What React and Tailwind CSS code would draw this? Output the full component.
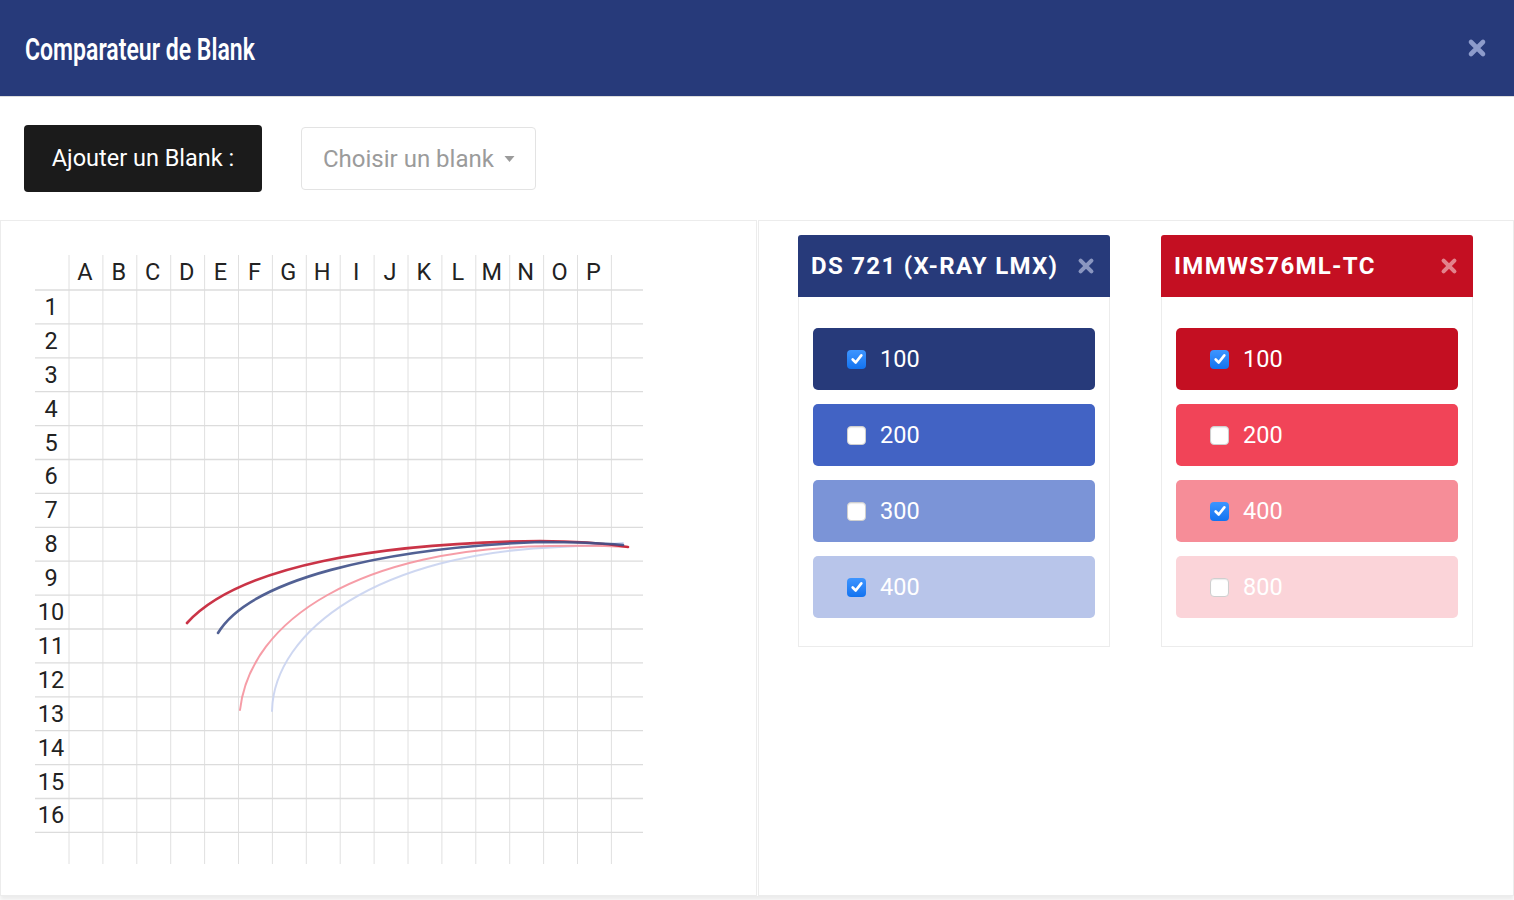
import { useState } from 'react';

const COLS = 'ABCDEFGHIJKLMNOP'.split('');
const ROWS = Array.from({ length: 16 }, (_, i) => i + 1);

// grid geometry, page coordinates
const X0 = 69;
const Y0 = 290;
const STEP = 33.9;

const blanks = [
    {
        id: 'ds721',
        name: 'DS 721 (X-RAY LMX)',
        header: 'bg-[#273a7a]',
        close: 'text-[#8a96c0]',
        sizes: [
            { size: 100, bg: 'bg-[#273a7a]', checked: true },
            { size: 200, bg: 'bg-[#4263c4]', checked: false },
            { size: 300, bg: 'bg-[#7b94d7]', checked: false },
            { size: 400, bg: 'bg-[#b8c5ea]', checked: true },
        ],
    },
    {
        id: 'immws',
        name: 'IMMWS76ML-TC',
        header: 'bg-[#c40f22]',
        close: 'text-[#e2838c]',
        sizes: [
            { size: 100, bg: 'bg-[#c40f22]', checked: true },
            { size: 200, bg: 'bg-[#f14458]', checked: false },
            { size: 400, bg: 'bg-[#f68d98]', checked: true },
            { size: 800, bg: 'bg-[#fbd4d9]', checked: false },
        ],
    },
];

// curves drawn on the grid (one per checked size)
const curves = [
    { d: 'M272 711 C 274 630 380 553 560 547 Q 600 545 623 543', color: '#c9d3f0', width: 2 },
    { d: 'M240 710 C 250 620 360 548 550 546 Q 595 545 628 547', color: '#f5929d', width: 2 },
    { d: 'M187 623 C 240 565 380 543 540 541 Q 590 541 628 547', color: '#c41e33', width: 2.6 },
    { d: 'M218 633 C 250 580 380 548 540 542 Q 590 542 623 545', color: '#3f5088', width: 2.6 },
];

function CloseIcon({ className }) {
    return (
        <svg viewBox="0 0 20 20" className={className} fill="none">
            <path d="M4 4 L16 16 M16 4 L4 16" stroke="currentColor" strokeWidth="4.6" strokeLinecap="round" />
        </svg>
    );
}

function Checkbox({ checked }) {
    if (checked) {
        return (
            <span className="w-[19px] h-[19px] rounded-[4px] bg-gradient-to-b from-[#3d95ff] to-[#1173f0] flex items-center justify-center shrink-0">
                <svg viewBox="0 0 12 12" className="w-[14px] h-[14px]" fill="none">
                    <path d="M2.3 6.4 L4.9 9 L9.7 2.9" stroke="white" strokeWidth="2.3" strokeLinecap="round" strokeLinejoin="round" />
                </svg>
            </span>
        );
    }
    return <span className="w-[19px] h-[19px] rounded-[4px] bg-white border border-[#cfcfcf] shadow-[inset_0_1px_1px_rgba(0,0,0,0.08)] shrink-0" />;
}

function Chart() {
    const right = 643;
    return (
        <svg width="755" height="674" viewBox="1 221 755 674" className="block">
            {/* vertical lines */}
            {Array.from({ length: 17 }, (_, i) => (
                <line key={'v' + i} x1={X0 + i * STEP} y1={255} x2={X0 + i * STEP} y2={864} stroke="#e0e0e0" strokeWidth="1" />
            ))}
            {/* horizontal lines */}
            {Array.from({ length: 17 }, (_, i) => (
                <line key={'h' + i} x1={35} y1={Y0 + i * STEP} x2={right} y2={Y0 + i * STEP} stroke="#dcdcdc" strokeWidth="1.3" />
            ))}
            {COLS.map((c, i) => (
                <text key={c} x={X0 + i * STEP + STEP / 2 - 1} y={280} textAnchor="middle" fontSize="23.5" fill="#222" fontFamily="Roboto, sans-serif">{c}</text>
            ))}
            {ROWS.map((r, i) => (
                <text key={r} x={51} y={Y0 + i * STEP + STEP / 2 + 8} textAnchor="middle" fontSize="23.5" fill="#222" fontFamily="Roboto, sans-serif">{r}</text>
            ))}
            {curves.map((c, i) => (
                <path key={i} d={c.d} stroke={c.color} strokeWidth={c.width} fill="none" strokeLinecap="round" opacity="0.9" />
            ))}
        </svg>
    );
}

function BlankCard({ blank }) {
    const [sizes, setSizes] = useState(blank.sizes);

    const toggle = (size) => {
        setSizes(sizes.map(s => (s.size === size ? { ...s, checked: !s.checked } : s)));
    };

    return (
        <div className="w-[312px]">
            <div className={`${blank.header} h-[62px] rounded-t-[3px] flex items-center justify-between pl-[13px] pr-[15px]`}>
                <span className="text-white text-[24px] font-bold tracking-[1.3px]">{blank.name}</span>
                <CloseIcon className={`w-[18px] h-[18px] ${blank.close}`} />
            </div>
            <div className="border border-t-0 border-[#ececec] px-[14px] pt-[31px] pb-[28px] flex flex-col gap-[14px]">
                {sizes.map(s => (
                    <div key={s.size} onClick={() => toggle(s.size)} className={`${s.bg} h-[62px] rounded-[5px] flex items-center gap-[14px] pl-[34px] cursor-pointer`}>
                        <Checkbox checked={s.checked} />
                        <span className="text-white text-[23.5px] leading-none pt-[1px]">{s.size}</span>
                    </div>
                ))}
            </div>
        </div>
    );
}

export default function App() {
    return (
        <div className="w-full min-h-screen bg-white font-['Roboto',sans-serif] overflow-hidden">
            <div className="h-[97px] bg-[#273a7a] border-b border-[#dcdcdc] flex items-center justify-between pl-[25px] pr-[27px]">
                <h1 className="text-white text-[32px] font-semibold inline-block origin-left scale-x-[0.72] whitespace-nowrap pt-[2px]">Comparateur de Blank</h1>
                <CloseIcon className="w-[20px] h-[20px] text-[#8d9bcb]" />
            </div>

            <div className="h-[123px] flex items-center gap-[39px] px-[24px]">
                <button className="h-[67px] w-[238px] bg-[#1b1b1b] rounded-[4px] text-white text-[23.5px]">Ajouter un Blank :</button>
                <div className="h-[63px] w-[235px] border border-[#e3e3e3] rounded-[4px] flex items-center justify-between pl-[21px] pr-[20px]">
                    <span className="text-[#9b9b9b] text-[24px]">Choisir un blank</span>
                    <svg viewBox="0 0 10 6" className="w-[11px] h-[6px]"><path d="M0 0 L10 0 L5 6 Z" fill="#9b9b9b" /></svg>
                </div>
            </div>

            <div className="flex gap-[1px] shadow-[0_4px_4px_rgba(0,0,0,0.08)]">
                <div className="w-[757px] h-[676px] border border-[#ececec] overflow-hidden">
                    <Chart />
                </div>
                <div className="flex-1 h-[676px] border border-[#ececec] flex gap-[51px] pl-[39px] pt-[14px] items-start">
                    {blanks.map(b => (
                        <BlankCard key={b.id} blank={b} />
                    ))}
                </div>
            </div>
        </div>
    );
}
